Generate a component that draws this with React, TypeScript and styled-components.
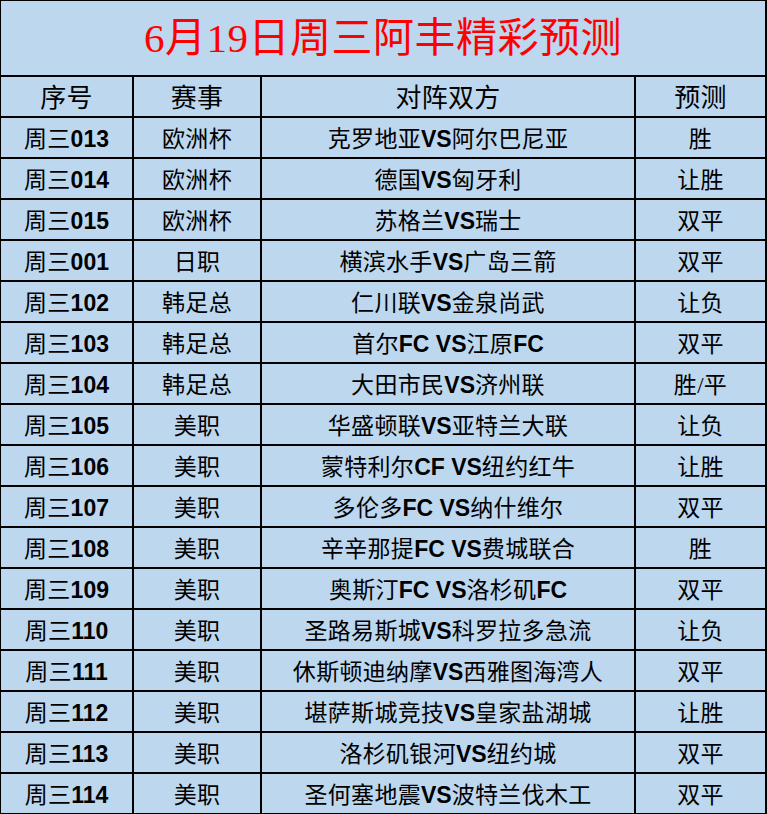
import { Fragment } from "react";
import styled, { createGlobalStyle } from "styled-components";

const GlobalStyle = createGlobalStyle`
  html, body {
    margin: 0;
    padding: 0;
    background: #ffffff;
  }
`;

const Sheet = styled.div`
  width: 767px;
  height: 814px;
  box-sizing: border-box;
  overflow: hidden;
  display: grid;
  grid-template-columns: 131px 126px 372px 129px;
  grid-template-rows: 74px 39px repeat(17, 39px);
  gap: 2px;
  padding: 1px 2px 0 1px;
  background: #000000;
`;

const Cell = styled.div`
  background: #bdd7ee;
  display: flex;
  align-items: center;
  justify-content: center;
  white-space: nowrap;
  color: #000000;
  font-family: "Liberation Serif", "Noto Sans CJK SC", serif;
  font-size: 23px;
  letter-spacing: 0.3px;
  line-height: 1;
  padding-top: 3px;
`;

const Title = styled(Cell)`
  grid-column: 1 / -1;
  color: #ff0000;
  font-size: 41px;
  letter-spacing: 0.5px;
  padding-top: 0;
`;

const Head = styled(Cell)`
  font-size: 26px;
  padding-top: 4px;
`;

const Latin = styled.span`
  font-family: "Liberation Sans", Arial, sans-serif;
  font-weight: bold;
  font-size: 23px;
  letter-spacing: 0;
`;

type Row = [string, string, string, string];

const rows: Row[] = [
  ["周三013", "欧洲杯", "克罗地亚VS阿尔巴尼亚", "胜"],
  ["周三014", "欧洲杯", "德国VS匈牙利", "让胜"],
  ["周三015", "欧洲杯", "苏格兰VS瑞士", "双平"],
  ["周三001", "日职", "横滨水手VS广岛三箭", "双平"],
  ["周三102", "韩足总", "仁川联VS金泉尚武", "让负"],
  ["周三103", "韩足总", "首尔FC VS江原FC", "双平"],
  ["周三104", "韩足总", "大田市民VS济州联", "胜/平"],
  ["周三105", "美职", "华盛顿联VS亚特兰大联", "让负"],
  ["周三106", "美职", "蒙特利尔CF VS纽约红牛", "让胜"],
  ["周三107", "美职", "多伦多FC VS纳什维尔", "双平"],
  ["周三108", "美职", "辛辛那提FC VS费城联合", "胜"],
  ["周三109", "美职", "奥斯汀FC VS洛杉矶FC", "双平"],
  ["周三110", "美职", "圣路易斯城VS科罗拉多急流", "让负"],
  ["周三111", "美职", "休斯顿迪纳摩VS西雅图海湾人", "双平"],
  ["周三112", "美职", "堪萨斯城竞技VS皇家盐湖城", "让胜"],
  ["周三113", "美职", "洛杉矶银河VS纽约城", "双平"],
  ["周三114", "美职", "圣何塞地震VS波特兰伐木工", "双平"],
];

// latin letters and digits are bold Arial in the sheet, the rest stays plain
function mixed(text: string) {
  return text.split(/([A-Za-z0-9 ]+)/).map((part, i) =>
    /[A-Za-z0-9]/.test(part) ? <Latin key={i}>{part.replace(/ /g, "\u00a0")}</Latin> : part
  );
}

export default function App() {
  return (
    <>
      <GlobalStyle />
      <Sheet>
        <Title>6月19日周三阿丰精彩预测</Title>
        <Head>序号</Head>
        <Head>赛事</Head>
        <Head>对阵双方</Head>
        <Head>预测</Head>
        {rows.map((r) => (
          <Fragment key={r[0]}>
            <Cell>{mixed(r[0])}</Cell>
            <Cell>{r[1]}</Cell>
            <Cell>{mixed(r[2])}</Cell>
            <Cell>{r[3]}</Cell>
          </Fragment>
        ))}
      </Sheet>
    </>
  );
}
